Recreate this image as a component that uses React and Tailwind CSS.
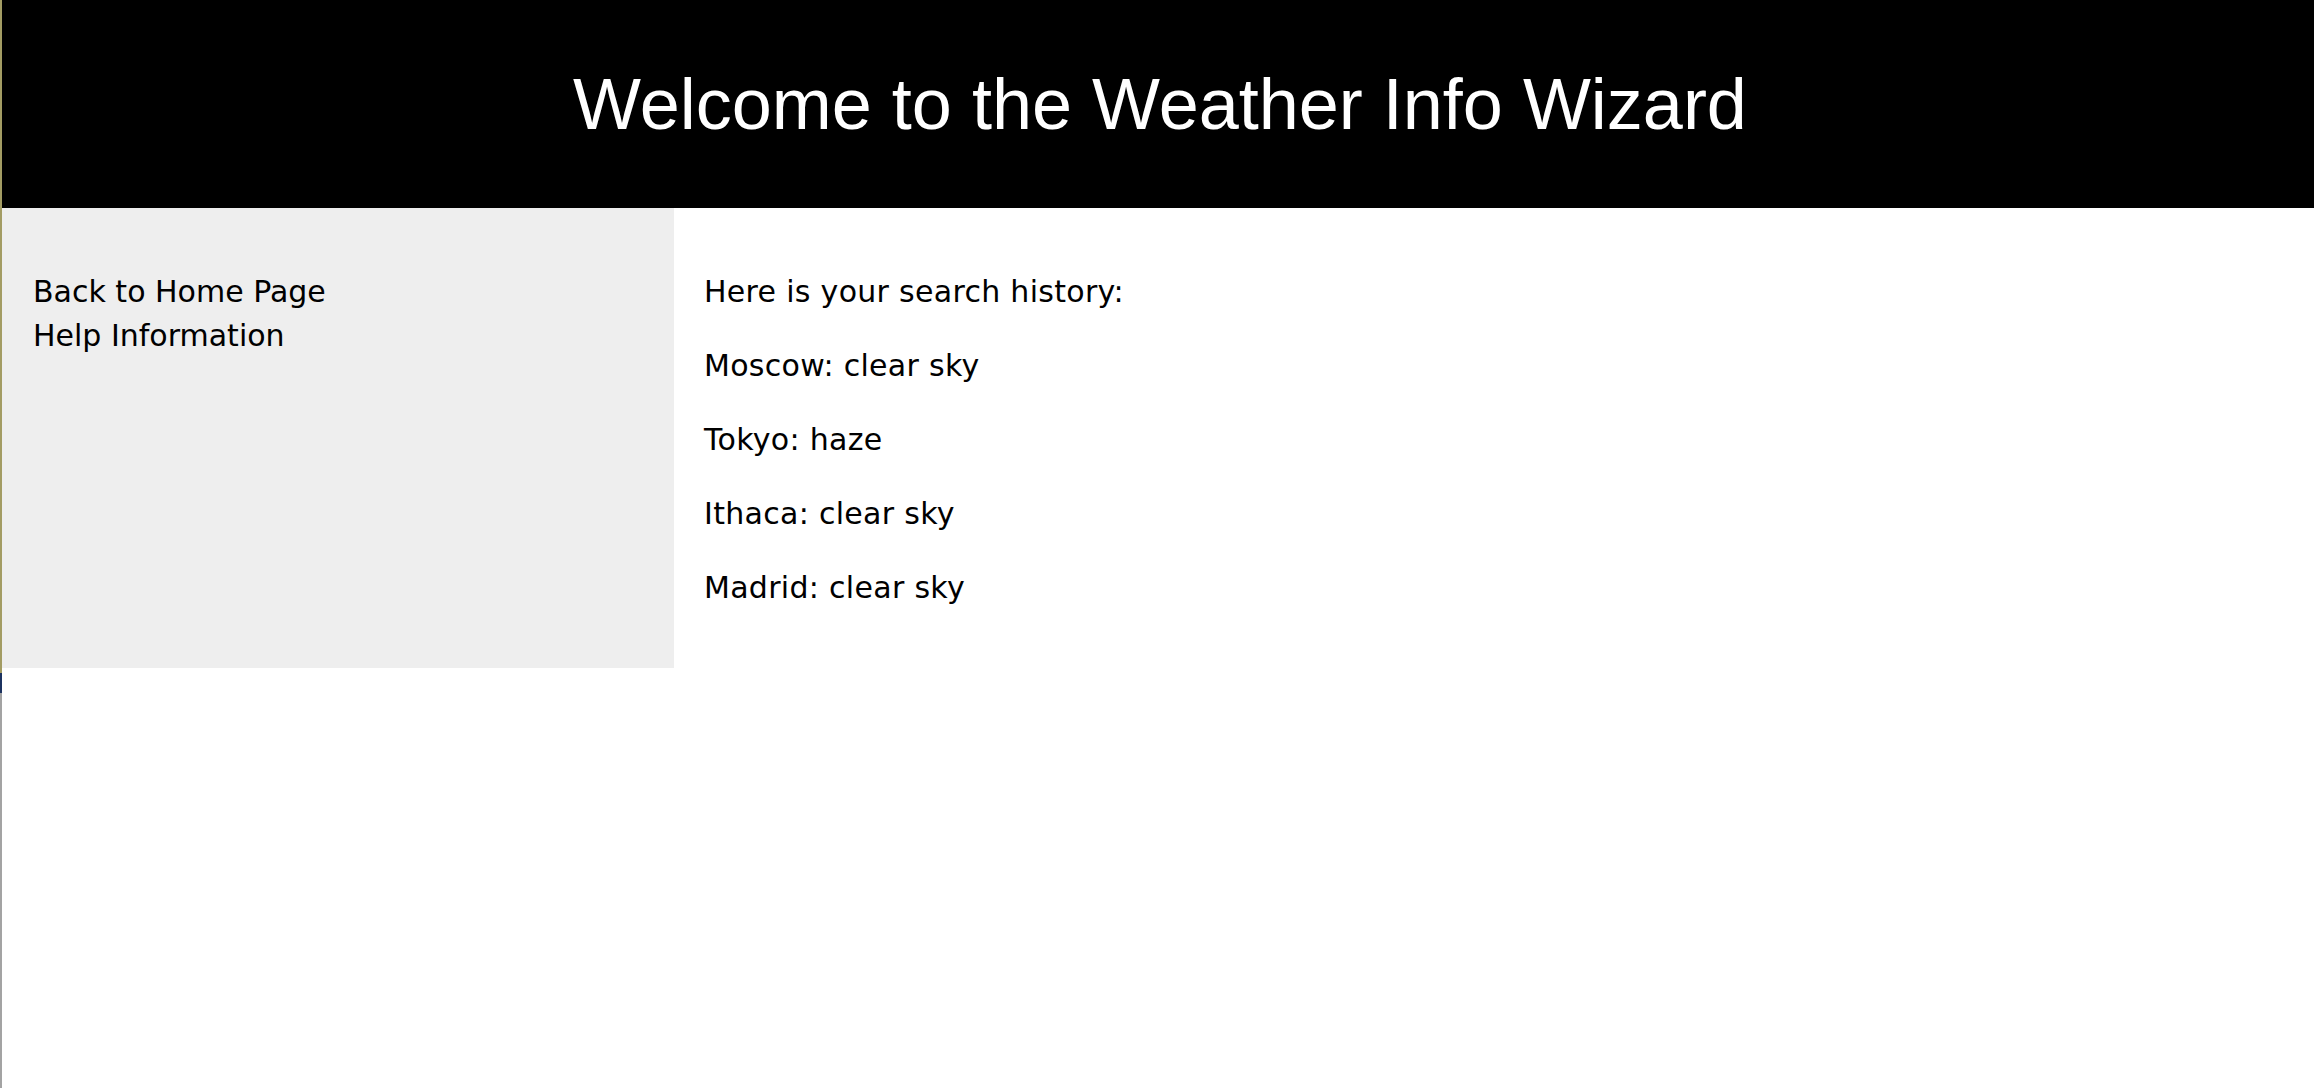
import React from 'react';

const history = [
  { city: 'Moscow', weather: 'clear sky' },
  { city: 'Tokyo', weather: 'haze' },
  { city: 'Ithaca', weather: 'clear sky' },
  { city: 'Madrid', weather: 'clear sky' },
];

const App = () => {
  return (
    <div className="flex min-h-[1088px] bg-white">
      {/* desktop edge peeking through on the left */}
      <div className="flex w-[2px] shrink-0 flex-col">
        <div className="h-[673px] bg-[#a39c63]"></div>
        <div className="h-[20px] bg-[#1c3260]"></div>
        <div className="flex-1 bg-[#a3a3a3]"></div>
      </div>

      <div className="flex flex-1 flex-col">
        <header className="flex h-[208px] items-center justify-center bg-black pl-[4px]">
          <h1 className="text-[72px] leading-none text-white font-['Liberation_Sans',Arial,sans-serif]">
            Welcome to the Weather Info Wizard
          </h1>
        </header>

        <div className="flex font-['DejaVu_Sans',Verdana,sans-serif] text-[30px] text-black">
          <nav className="flex h-[460px] w-[672px] shrink-0 flex-col bg-[#eeeeee] pl-[31px] pt-[62px] leading-[44px]">
            <a href="#">Back to Home Page</a>
            <a href="#">Help Information</a>
          </nav>

          <main className="flex flex-col gap-[31px] pl-[30px] pt-[62px] leading-[43px] tracking-[0.3px]">
            <p>Here is your search history:</p>
            {history.map((item) => (
              <p key={item.city}>
                {item.city}: {item.weather}
              </p>
            ))}
          </main>
        </div>
      </div>
    </div>
  );
};

export default App;
